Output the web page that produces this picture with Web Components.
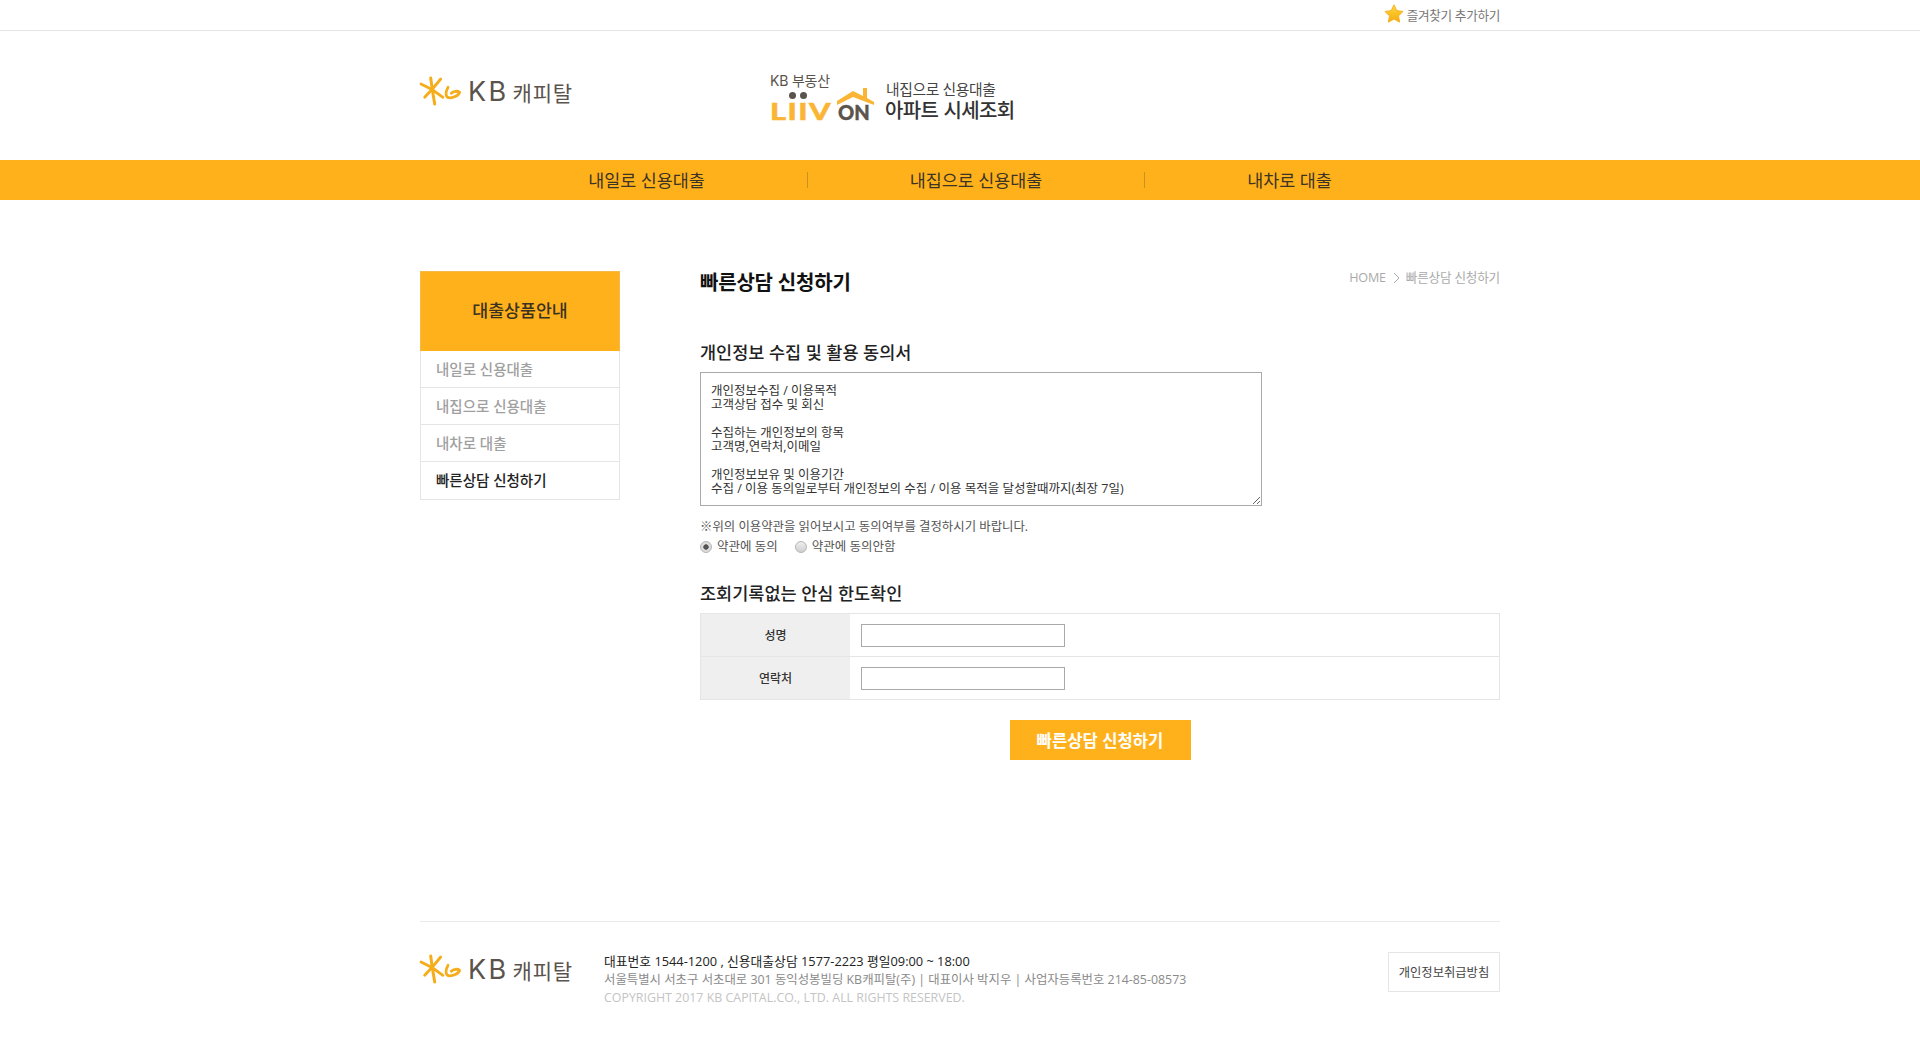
<!DOCTYPE html>
<html lang="ko">
<head>
<meta charset="utf-8">
<title>빠른상담 신청하기</title>
<style>
    html, body { margin: 0; background: #fff; }
    body { font-family: "Open Sans", "Noto Sans CJK KR", sans-serif; color: #333; }
</style>
</head>
<body>
<kb-topbar></kb-topbar>
<kb-header></kb-header>
<kb-nav>
    <kb-nav-item>내일로 신용대출</kb-nav-item>
    <kb-nav-item>내집으로 신용대출</kb-nav-item>
    <kb-nav-item last>내차로 대출</kb-nav-item>
</kb-nav>
<kb-page>
    <kb-sidebar slot="side" heading="대출상품안내">
        <kb-side-item>내일로 신용대출</kb-side-item>
        <kb-side-item>내집으로 신용대출</kb-side-item>
        <kb-side-item>내차로 대출</kb-side-item>
        <kb-side-item active>빠른상담 신청하기</kb-side-item>
    </kb-sidebar>
    <kb-consult slot="main"></kb-consult>
</kb-page>
<kb-footer></kb-footer>

<script>
class KbLogo extends HTMLElement {
    constructor() {
        super();
        this.attachShadow({ mode: "open" });
        this.shadowRoot.innerHTML = `
            <style>
                :host { display: inline-flex; align-items: center; height: 30px; color: #5a544c; }
                svg { display: block; margin-right: 7px; overflow: visible; }
                .kb { font: 400 27px/30px "Inter", sans-serif; letter-spacing: 2.4px; margin-right: 4px; }
                .name { font: 400 21px/30px "Noto Sans CJK KR", sans-serif; letter-spacing: 0.8px; }
            </style>
            <svg width="41" height="28" viewBox="0 0 41 28" fill="none" stroke="#f6ad1c" stroke-linecap="round" stroke-linejoin="round">
                <path d="M10.7 0 L12.2 11 L14.7 26" stroke-width="3"/>
                <path d="M1 6 L12 11.5 L4.7 19.3" stroke-width="2.8"/>
                <path d="M20.7 1 L12 11.5 L23 19.3" stroke-width="2.8"/>
                <path d="M28 9.3 C26 13 25.6 17 27.2 19 C30 21 38 18.5 39.6 14.4 C37.5 12.6 33.5 13 31.3 15.3" stroke-width="2.8"/>
            </svg>
            <span class="kb">KB</span><span class="name">캐피탈</span>
        `;
    }
}
customElements.define("kb-logo", KbLogo);

class KbTopbar extends HTMLElement {
    constructor() {
        super();
        this.attachShadow({ mode: "open" });
        this.shadowRoot.innerHTML = `
            <style>
                :host { display: block; height: 30px; border-bottom: 1px solid #e5e5e5; }
                .inner { width: 1080px; height: 30px; margin: 0 auto; display: flex; justify-content: flex-end; align-items: center; gap: 3px; }
                svg { margin-top: -3px; }
                span { font-size: 12.6px; color: #777; letter-spacing: -0.3px; margin-top: -2px; }
            </style>
            <div class="inner">
                <svg width="20" height="19" viewBox="0 0 24 23">
                    <defs><linearGradient id="st" x1="0" y1="0" x2="0" y2="1"><stop offset="0" stop-color="#ffd83a"/><stop offset="1" stop-color="#f6ab14"/></linearGradient></defs>
                    <path d="M12 1 L15.4 8 L23 9 L17.5 14.4 L18.9 22 L12 18.3 L5.1 22 L6.5 14.4 L1 9 L8.6 8 Z" fill="url(#st)" stroke="#f6ab14" stroke-linejoin="round"/>
                </svg>
                <span>즐겨찾기 추가하기</span>
            </div>
        `;
    }
}
customElements.define("kb-topbar", KbTopbar);

class KbHeader extends HTMLElement {
    constructor() {
        super();
        this.attachShadow({ mode: "open" });
        this.shadowRoot.innerHTML = `
            <style>
                :host { display: block; height: 129px; }
                .inner { width: 1080px; height: 129px; margin: 0 auto; display: flex; }
                .left { width: 350px; padding-top: 46px; box-sizing: border-box; }
                .liiv { width: 110px; padding-top: 43px; box-sizing: border-box; color: #5a544c; }
                .sub { height: 14px; font: 400 14px/14px "Inter", "Noto Sans CJK KR", sans-serif; letter-spacing: -0.2px; white-space: nowrap; }
                .brand { display: flex; position: relative; height: 34px; align-items: flex-end; font: 900 22px/20px "Lato", sans-serif; }
                .brand b { display: block; width: 68px; color: #fbb534; letter-spacing: 1px; font-weight: 900; transform: scaleX(1.4); transform-origin: left; -webkit-text-stroke: 0.4px #fbb534; }
                .brand i { font-style: normal; font-size: 20px; letter-spacing: 0; -webkit-text-stroke: 0.4px #5a544c; }
                .dots { position: absolute; left: 19px; top: 4px; display: flex; gap: 4px; }
                .dots s { display: block; width: 7px; height: 7px; border-radius: 50%; background: #5a544c; }
                svg { position: absolute; left: 67px; top: 0; }
                .text { padding: 48px 0 0 6px; }
                .t1 { font: 400 14.8px/19px "Noto Sans CJK KR", sans-serif; color: #444; letter-spacing: -0.4px; }
                .t2 { font: 500 20px/24px "Noto Sans CJK KR", sans-serif; color: #333; letter-spacing: -0.6px; margin-left: -1px; }
            </style>
            <div class="inner">
                <div class="left"><kb-logo></kb-logo></div>
                <div class="liiv">
                    <div class="sub">KB 부동산</div>
                    <div class="brand">
                        <span class="dots"><s></s><s></s></span>
                        <svg width="37" height="17" viewBox="0 0 37 17"><path d="M0 13 L16 3 L26 8 L26 0 L30 0 L30 10 L37 14 L37 17 L16 9 L0 17 Z" fill="#fbb534"/></svg>
                        <b>LIIV</b><i>ON</i>
                    </div>
                </div>
                <div class="text">
                    <div class="t1">내집으로 신용대출</div>
                    <div class="t2">아파트 시세조회</div>
                </div>
            </div>
        `;
    }
}
customElements.define("kb-header", KbHeader);

class KbNav extends HTMLElement {
    constructor() {
        super();
        this.attachShadow({ mode: "open" });
        this.shadowRoot.innerHTML = `
            <style>
                :host { display: flex; justify-content: center; align-items: center; height: 40px; background: #ffb11b; }
            </style>
            <slot></slot>
        `;
    }
}
customElements.define("kb-nav", KbNav);

class KbNavItem extends HTMLElement {
    constructor() {
        super();
        this.attachShadow({ mode: "open" });
        this.shadowRoot.innerHTML = `
            <style>
                :host { display: block; padding: 0 102px; height: 16px; line-height: 16px; font-size: 17.4px; color: #3c3424; border-right: 1px solid #c99024; }
                :host([last]) { border-right: 0; }
            </style>
            <slot></slot>
        `;
    }
}
customElements.define("kb-nav-item", KbNavItem);

class KbPage extends HTMLElement {
    constructor() {
        super();
        this.attachShadow({ mode: "open" });
        this.shadowRoot.innerHTML = `
            <style>
                :host { display: block; width: 1080px; height: 722px; margin: 0 auto; box-sizing: border-box; padding-top: 71px; border-bottom: 1px solid #e9e9e9; }
                .row { display: flex; gap: 80px; }
            </style>
            <div class="row"><slot name="side"></slot><slot name="main"></slot></div>
        `;
    }
}
customElements.define("kb-page", KbPage);

class KbSidebar extends HTMLElement {
    constructor() {
        super();
        this.attachShadow({ mode: "open" });
        this.heading = this.getAttribute("heading");
        this.shadowRoot.innerHTML = `
            <style>
                :host { display: block; width: 200px; box-sizing: border-box; }
                h2 { margin: 0; height: 80px; line-height: 78px; background: #ffb11b; text-align: center; font-size: 17.3px; font-weight: 500; color: #3a3120; border: 1px solid #f2b84a; border-bottom: 0; box-sizing: border-box; }
                .list { border: 1px solid #e5e5e5; border-top: 0; }
            </style>
            <h2 id="heading"></h2>
            <div class="list"><slot></slot></div>
        `;
        this.shadowRoot.getElementById("heading").innerText = this.heading;
    }
}
customElements.define("kb-sidebar", KbSidebar);

class KbSideItem extends HTMLElement {
    constructor() {
        super();
        this.attachShadow({ mode: "open" });
        this.shadowRoot.innerHTML = `
            <style>
                :host { display: block; height: 37px; line-height: 37px; padding-left: 15px; font-size: 14.5px; font-weight: 500; color: #a0a0a0; border-bottom: 1px solid #e5e5e5; box-sizing: border-box; }
                :host(:last-child) { border-bottom: 0; }
                :host([active]) { color: #222; }
            </style>
            <slot></slot>
        `;
    }
}
customElements.define("kb-side-item", KbSideItem);

class KbConsult extends HTMLElement {
    constructor() {
        super();
        this.attachShadow({ mode: "open" });
        this.shadowRoot.innerHTML = `
            <style>
                :host { display: block; width: 800px; }
                .title { display: flex; justify-content: space-between; height: 71px; }
                h1 { margin: 0; font-size: 20px; line-height: 24px; font-weight: 700; color: #111; letter-spacing: -0.2px; }
                .crumb { font-size: 12.6px; line-height: 14px; color: #aaa; display: flex; align-items: center; height: 14px; letter-spacing: -0.2px; }
                .crumb svg { margin: 0 6px 0 7px; }
                h3 { margin: 0; font-size: 17.5px; line-height: 20px; font-weight: 500; color: #222; }
                textarea { display: block; box-sizing: border-box; width: 562px; height: 134px; margin: 10px 0 0; padding: 11px 10px 9px; border: 1px solid #a9a9a9; font: 12.5px/14px "Open Sans", "Noto Sans CJK KR", sans-serif; color: #333; outline: 0; overflow: hidden; }
                .note { margin: 14px 0 0; font-size: 12.4px; line-height: 14px; color: #555; }
                .agree { display: flex; align-items: center; height: 14px; margin-top: 6px; font-size: 12.5px; line-height: 14px; color: #555; }
                .agree label { display: flex; align-items: center; margin-right: 17px; }
                input[type=radio] { appearance: none; width: 12px; height: 12px; margin: 0 5px 0 0; border-radius: 50%; border: 1px solid #b5b5b5; background: linear-gradient(#eee, #cfcfcf); box-sizing: border-box; }
                input[type=radio]:checked { background: radial-gradient(circle, #555 0 2.4px, #ddd 3px); }
                h3.second { margin-top: 29px; }
                .form { margin-top: 10px; border-top: 1px solid #e5e5e5; }
                .row { display: flex; height: 42px; border-bottom: 1px solid #e5e5e5; border-right: 1px solid #e5e5e5; }
                .row .th { width: 150px; background: #efefef; text-align: center; line-height: 43px; font-size: 12px; font-weight: 500; color: #333; border-left: 1px solid #e5e5e5; box-sizing: border-box; }
                .row .td { display: flex; align-items: center; padding-left: 11px; }
                .row input { width: 204px; height: 23px; box-sizing: border-box; border: 1px solid #a9a9a9; padding: 0 4px; margin: 0; }
                .actions { display: flex; justify-content: center; margin-top: 20px; }
                button { width: 181px; height: 40px; border: 0; background: #ffb11b; color: #fff; font: 700 16.6px/40px "Noto Sans CJK KR", sans-serif; padding: 0; }
            </style>
            <div class="title">
                <h1>빠른상담 신청하기</h1>
                <div class="crumb">HOME<svg width="7" height="12" viewBox="0 0 7 12" fill="none" stroke="#aaa"><path d="M1 1 L6 6 L1 11"/></svg>빠른상담 신청하기</div>
            </div>
            <h3>개인정보 수집 및 활용 동의서</h3>
            <textarea readonly>개인정보수집 / 이용목적
고객상담 접수 및 회신

수집하는 개인정보의 항목
고객명,연락처,이메일

개인정보보유 및 이용기간
수집 / 이용 동의일로부터 개인정보의 수집 / 이용 목적을 달성할때까지(최장 7일)</textarea>
            <p class="note">※위의 이용약관을 읽어보시고 동의여부를 결정하시기 바랍니다.</p>
            <div class="agree">
                <label><input type="radio" name="agree" checked>약관에 동의</label>
                <label><input type="radio" name="agree">약관에 동의안함</label>
            </div>
            <h3 class="second">조회기록없는 안심 한도확인</h3>
            <div class="form">
                <div class="row"><div class="th">성명</div><div class="td"><input type="text"></div></div>
                <div class="row"><div class="th">연락처</div><div class="td"><input type="text"></div></div>
            </div>
            <div class="actions"><button type="button">빠른상담 신청하기</button></div>
        `;
    }
}
customElements.define("kb-consult", KbConsult);

class KbFooter extends HTMLElement {
    constructor() {
        super();
        this.attachShadow({ mode: "open" });
        this.shadowRoot.innerHTML = `
            <style>
                :host { display: block; width: 1080px; margin: 0 auto; }
                .inner { display: flex; padding-top: 30px; }
                kb-logo { width: 184px; flex: none; margin-top: 3px; }
                .info { flex: 1; font-size: 12.4px; line-height: 18px; color: #8a8a8a; }
                .info .tel { color: #222; font-size: 12.8px; line-height: 19px; }
                .info .copy { color: #c4c4c4; }
                a { display: block; width: 112px; height: 40px; line-height: 39px; box-sizing: border-box; border: 1px solid #e5e5e5; text-align: center; font-size: 12.3px; color: #444; }
            </style>
            <div class="inner">
                <kb-logo></kb-logo>
                <div class="info">
                    <div class="tel">대표번호 1544-1200 , 신용대출상담 1577-2223 평일09:00 ~ 18:00</div>
                    <div>서울특별시 서초구 서초대로 301 동익성봉빌딩 KB캐피탈(주) | 대표이사 박지우 | 사업자등록번호 214-85-08573</div>
                    <div class="copy">COPYRIGHT 2017 KB CAPITAL.CO., LTD. ALL RIGHTS RESERVED.</div>
                </div>
                <a>개인정보취급방침</a>
            </div>
        `;
    }
}
customElements.define("kb-footer", KbFooter);
</script>
</body>
</html>
